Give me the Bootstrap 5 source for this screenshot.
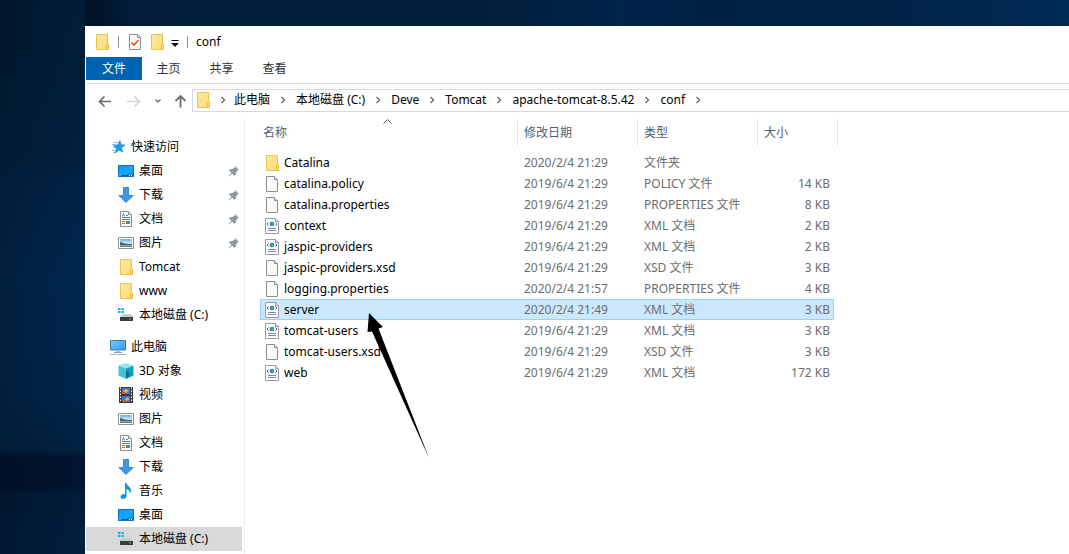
<!DOCTYPE html>
<html lang="zh-CN">
<head>
<meta charset="utf-8">
<meta name="viewport" content="width=device-width, initial-scale=1">
<title>conf</title>
<link href="https://cdn.jsdelivr.net/npm/bootstrap@5.3.0/dist/css/bootstrap.min.css" rel="stylesheet">
<style>
  body {
    font: 12px/16px "Noto Sans", "Noto Sans CJK SC", sans-serif;
    color: #000;
    background:
      linear-gradient(90deg, rgba(0,16,32,.35), rgba(0,40,80,.15)) 0 0 / 85px 100% no-repeat,
      linear-gradient(180deg, #001a33 0, #001b35 50px, #001f3c 160px, #002346 185px, #00284f 280px, #00264b 400px, #002140 450px, #00122a 458px, #00122a 488px, #001a36 494px, #001c3a 554px) 0 0 / 85px 100% no-repeat,
      linear-gradient(90deg, #001428 0, #001228 90px, #001c38 130px, #001f3c 500px, #00254a 620px, #002144 700px, #002244 850px, #002b54 100%);
  }
  a { color: inherit; text-decoration: none; }
  .desktop { padding: 26px 0 0 85px; min-height: 100vh; }
  .explorer { background: #fff; padding-left: 1px; }
  .titlebar { height: 31px; padding-left: 8px; }
  .titlebar .divider { width: 1px; height: 12px; background: #8f8f8f; margin: 0 8px; }
  .titlebar .folder-btn { margin: 0 6px; }
  .icon-btn { border: 0; background: none; padding: 0; display: flex; }
  .ribbon { height: 27px; border-bottom: 1px solid #dadbdc; }
  .ribbon .nav-link { width: 53px; height: 23px; padding: 0; line-height: 24px; text-align: center; color: #333; }
  .ribbon .nav-link.active { width: 56px; background: #0063b1; color: #fff; }
  .toolbar { padding: 5px 0 7px 11px; }
  .toolbar .nav-tools { gap: 14px; margin-right: 6px; }
  .address { height: 23px; border: 1px solid #d9d9d9; border-right: 0; padding: 0 0 2px 2px; }
  .crumb-sep { width: 26px; text-align: center; line-height: 0; }
  .crumb-sep.root-sep { width: 23px; }
  .sidebar { width: 159px; border-right: 1px solid #f0f0f0; padding: 16px 2px 3px 0; }
  .sidebar a { display: flex; align-items: center; gap: 5px; height: 24px; padding: 0 2px 0 32px; }
  .sidebar .group-head { padding-left: 24px; }
  .sidebar .current { background: #d9d9d9; }
  .listing { padding-left: 15px; }
  .files { width: auto; table-layout: fixed; border-collapse: separate; border-spacing: 0; color: #6d6d6d; }
  .files th { height: 27px; padding: 0 6px; font-weight: 400; color: #4c607a; border-left: 1px solid #e5e5e5; position: relative; }
  .files th:first-child { border-left: 0; padding-left: 3px; }
  .files th.edge { padding: 0; border-left: 0; border-right: 1px solid #e5e5e5; }
  .files td { height: 21px; padding: 0 4px 0 7px; white-space: nowrap; border: solid transparent; border-width: 1px 0; line-height: 16px; }
  .files td:first-child { padding-left: 3px; border-left-width: 1px; color: #000; }
  .files td.size { border-right-width: 1px; padding-right: 3px; text-align: right; }
  .files .chosen td { background: #cce8ff; background-clip: padding-box; border-color: #99d1ff; }
  .col-name { width: 257px; } .col-mid { width: 120px; } .col-size { width: 77px; } .col-edge { width: 4px; }
  .files .spacer-row td { height: 6px; padding: 0; border: 0; line-height: 0; }
  .sort-mark { position: absolute; left: 123px; top: 0; }
  .pointer { position: absolute; left: 100px; top: 6px; z-index: 2; }
</style>
</head>
<body>
<svg width="0" height="0" class="position-absolute" aria-hidden="true">
  <defs>
    <linearGradient id="g-fold" x1="0" y1="0" x2="1" y2="1"><stop offset="0" stop-color="#ffe9a2"/><stop offset="1" stop-color="#ffdc74"/></linearGradient>
    <linearGradient id="g-blue" x1="0" y1="0" x2="1" y2="1"><stop offset="0" stop-color="#0a9bf5"/><stop offset=".55" stop-color="#19a6ff"/><stop offset="1" stop-color="#0c8bea"/></linearGradient>
    <linearGradient id="g-scr" x1="0" y1="0" x2="1" y2="1"><stop offset="0" stop-color="#7cc8fb"/><stop offset="1" stop-color="#2f9cf0"/></linearGradient>
    <linearGradient id="g-sky" x1="0" y1="0" x2="0" y2="1"><stop offset="0" stop-color="#6fb2ee"/><stop offset=".6" stop-color="#d8ecf8"/><stop offset="1" stop-color="#3a6f86"/></linearGradient>
    <symbol id="folder" viewBox="0 0 16 16"><path d="M2.500.5h11v15h-11z" fill="url(#g-fold)" stroke="#eac54f"/><path d="M12.500 15.500v-4.500l1-1h1v5.500z" fill="#ffe08a" stroke="#e6bd3e"/></symbol>
    <symbol id="page" viewBox="0 0 16 16"><path d="M2.500.5h8l3 3v12h-11z" fill="#f9fafa" stroke="#8e8e8e"/><path d="M10.500.5v3h3" fill="#e8e8e8" stroke="#8e8e8e"/></symbol>
    <symbol id="xml" viewBox="0 0 16 16"><path d="M1.500.5h10l3 3v12h-13z" fill="#fdfdfe" stroke="#9a98a4"/><path d="M11.500.5v3h3" fill="#e6e4ee" stroke="#9a98a4"/><path d="M4.500 4.500 3 6l1.500 1.500M11.500 4.500 13 6l-1.500 1.500" fill="none" stroke="#555577"/><circle cx="8" cy="6" r="2.300" fill="#2583b8"/><path d="M7 4.500l2 .5.500 1.500L8 7.500z" fill="#49b58e"/><path d="M4 10.500h8M4 12.500h8" stroke="#8f80a8"/></symbol>
    <symbol id="check" viewBox="0 0 16 16"><path d="M2.500.5h8l3 3v12h-11z" fill="#fafafa" stroke="#8e8e8e"/><path d="M10.500.5v3h3" fill="none" stroke="#8e8e8e"/><path d="M4.500 8.500 7 11l4.500-5" fill="none" stroke="#e8561d" stroke-width="1.600"/></symbol>
    <symbol id="star" viewBox="0 0 16 16"><path d="M10 1.500l1 4.200 4 .3-3.500 2.800 1.200 4.400L9 11l-3.700 3 1-4.600L3.500 6.500l4.300-.6z" fill="#1e9bea" stroke="#1480cc" stroke-width=".6"/><path d="M3 3.500h5M2 5.500h4M3 8.500h2M2 11.500h4M3 13.500h2" stroke="#7cc6f5"/></symbol>
    <symbol id="desk" viewBox="0 0 16 16"><path d="M.5 2.500h15v11H.5z" fill="url(#g-blue)" stroke="#0873c4"/><path d="M1 12h14v1H1z" fill="#0a5fa8"/><path d="M1.500 12.500h1M11 12.500h1M13 12.500h1" stroke="#fff"/></symbol>
    <symbol id="down" viewBox="0 0 16 16"><path d="M5.500.5h5v8h4.700L8 15.500.8 8.500h4.700z" fill="#3e98e8" stroke="#2678cc" stroke-width=".8"/></symbol>
    <symbol id="doc" viewBox="0 0 16 16"><path d="M2.500.5h8l3 3v12h-11z" fill="#fff" stroke="#8e8e8e"/><path d="M10.500.5v3h3" fill="#e8e8e8" stroke="#8e8e8e"/><path d="M4 5.500 5.500 2.500l1 3M8 4.500h2M4 6.500h8M4 8.500h8M4 10.500h3M4 12.500h3" fill="none" stroke="#2d8fdc"/><path d="M8 10h4v3H8z" fill="#4e87a4"/></symbol>
    <symbol id="pic" viewBox="0 0 16 16"><path d="M.5 2.500h15v11H.5z" fill="#fff" stroke="#8e8e8e"/><path d="M2 4h12v8H2z" fill="url(#g-sky)"/><path d="M2 7c3 1 5 2 12 2v1H2z" fill="#3b6b4f"/></symbol>
    <symbol id="drive" viewBox="0 0 16 16"><path d="M0 1h2.500v2H0zM3.500 1H6v2H3.500zM0 4h2.500v2H0zM3.500 4H6v2H3.500z" fill="#12b0f2"/><path d="M4 7h9l2 3H2z" fill="#c9cccf"/><path d="M2 10h13v4H2z" fill="#3a3d40"/><path d="M11 11.500h2v1h-2z" fill="#38e05a"/></symbol>
    <symbol id="pc" viewBox="0 0 16 16"><path d="M.5 1.500h15v9.500H.5z" fill="url(#g-scr)" stroke="#40789f"/><path d="M6 11.500h4v1.500H6z" fill="#b6c6d2"/><path d="M4 13.500h8" stroke="#8ba0b0"/><path d="M0 15.500h16" stroke="#9bb8d0"/></symbol>
    <symbol id="cube" viewBox="0 0 16 16"><path d="M8 0l7.500 2.500L8 5.500.5 2.500z" fill="#9be6f0"/><path d="M.5 2.500 8 5.500V16L.5 12.500z" fill="#43c3d8"/><path d="M15.500 2.500 8 5.500V16l7.500-3.500z" fill="#0c9dc4"/><path d="M8 7l4 4-4 5z" fill="#0b7088"/></symbol>
    <symbol id="film" viewBox="0 0 16 16"><path d="M1 0h14v16H1z" fill="#3b3b3f"/><path d="M2.500.5v15M13.500.5v15" stroke="#fff" stroke-dasharray="1.500 1.500"/><path d="M4 1h8v6H4zM4 9h8v6H4z" fill="#4774c8"/><path d="M5 4l3-2 3 2-3 2zM7 12l3-2 1 3-3 1z" fill="#dfb83c"/><path d="M4 5h3v2H4zM4 13h3v2H4z" fill="#c8553d"/></symbol>
    <symbol id="note" viewBox="0 0 16 16"><path d="M7 0h1.500c.5 3 4.500 3.500 4.500 7.500 0 1.500-.5 2.500-1.200 3.500.4-3-1.300-4-3.300-4.700V13c0 1.800-1.700 3-3.700 3-1.500 0-2.300-.8-2.300-1.900 0-1.900 2.200-3.300 4.500-3z" fill="#0c98ee"/></symbol>
    <symbol id="pin" viewBox="0 0 12 12"><path d="M7 1l4 4-1.500.5-1.500 2v2L6.500 11 4 8.500 1 11.500.5 11l3-3L1 5.500 2.500 4h2l2-1.500z" fill="#8d99a2"/></symbol>
    <symbol id="chev" viewBox="0 0 6 8"><path d="M1.500 1 4.500 4l-3 3" fill="none" stroke="#6d6d6d" stroke-width="1.400"/></symbol>
  </defs>
</svg>

<div class="desktop d-flex">
  <div class="explorer flex-grow-1 d-flex flex-column">
    <header class="titlebar d-flex align-items-center">
      <svg width="16" height="16"><use href="#folder"/></svg>
      <span class="divider"></span>
      <button class="icon-btn" type="button" aria-label="属性"><svg width="16" height="16"><use href="#check"/></svg></button>
      <button class="icon-btn folder-btn" type="button" aria-label="新建文件夹"><svg width="16" height="16"><use href="#folder"/></svg></button>
      <button class="icon-btn" type="button" aria-label="自定义快速访问工具栏"><svg width="8" height="16"><path d="M.5 6.500h7" stroke="#000"/><path d="M0 9h8l-4 4z" fill="#111"/></svg></button>
      <span class="divider"></span>
      <span>conf</span>
    </header>

    <nav class="ribbon nav flex-nowrap" aria-label="功能区">
      <a class="nav-link active" href="#">文件</a>
      <a class="nav-link" href="#">主页</a>
      <a class="nav-link" href="#">共享</a>
      <a class="nav-link" href="#">查看</a>
    </nav>

    <div class="toolbar d-flex align-items-center">
      <div class="nav-tools d-flex align-items-center">
        <button class="icon-btn" type="button" aria-label="后退"><svg width="16" height="16"><path d="M14 8.500H3M7.500 3.500l-5 5 5 5" fill="none" stroke="#6b6b6b" stroke-width="1.700"/></svg></button>
        <button class="icon-btn" type="button" aria-label="前进"><svg width="14" height="16"><path d="M0 8.500h12M7.500 3.500l5 5-5 5" fill="none" stroke="#d4d4d4" stroke-width="1.700"/></svg></button>
        <button class="icon-btn" type="button" aria-label="最近位置"><svg width="6" height="16"><path d="M.5 6.500 3 9l2.500-2.500" fill="none" stroke="#777" stroke-width="1.500"/></svg></button>
        <button class="icon-btn" type="button" aria-label="上移"><svg width="11" height="16"><path d="M5.500 14.500v-11M.5 8l5-5 5 5" fill="none" stroke="#6b6b6b" stroke-width="1.800"/></svg></button>
      </div>
      <div class="address flex-grow-1 d-flex align-items-center">
        <svg width="16" height="16"><use href="#folder"/></svg>
        <span class="crumb-sep root-sep"><svg width="6" height="8"><use href="#chev"/></svg></span>
        <a href="#">此电脑</a>
        <span class="crumb-sep"><svg width="6" height="8"><use href="#chev"/></svg></span>
        <a href="#">本地磁盘 (C:)</a>
        <span class="crumb-sep"><svg width="6" height="8"><use href="#chev"/></svg></span>
        <a href="#">Deve</a>
        <span class="crumb-sep"><svg width="6" height="8"><use href="#chev"/></svg></span>
        <a href="#">Tomcat</a>
        <span class="crumb-sep"><svg width="6" height="8"><use href="#chev"/></svg></span>
        <a href="#">apache-tomcat-8.5.42</a>
        <span class="crumb-sep"><svg width="6" height="8"><use href="#chev"/></svg></span>
        <a href="#">conf</a>
        <span class="crumb-sep"><svg width="6" height="8"><use href="#chev"/></svg></span>
      </div>
    </div>

    <div class="d-flex flex-grow-1">
      <nav class="sidebar flex-shrink-0 d-flex flex-column" aria-label="导航窗格">
        <a class="group-head" href="#"><svg width="16" height="16"><use href="#star"/></svg>快速访问</a>
        <a href="#"><svg width="16" height="16"><use href="#desk"/></svg>桌面<svg class="ms-auto" width="12" height="12"><use href="#pin"/></svg></a>
        <a href="#"><svg width="16" height="16"><use href="#down"/></svg>下载<svg class="ms-auto" width="12" height="12"><use href="#pin"/></svg></a>
        <a href="#"><svg width="16" height="16"><use href="#doc"/></svg>文档<svg class="ms-auto" width="12" height="12"><use href="#pin"/></svg></a>
        <a href="#"><svg width="16" height="16"><use href="#pic"/></svg>图片<svg class="ms-auto" width="12" height="12"><use href="#pin"/></svg></a>
        <a href="#"><svg width="16" height="16"><use href="#folder"/></svg>Tomcat</a>
        <a href="#"><svg width="16" height="16"><use href="#folder"/></svg>www</a>
        <a href="#"><svg width="16" height="16"><use href="#drive"/></svg>本地磁盘 (C:)</a>
        <a class="group-head mt-2" href="#"><svg width="16" height="16"><use href="#pc"/></svg>此电脑</a>
        <a href="#"><svg width="16" height="16"><use href="#cube"/></svg>3D 对象</a>
        <a href="#"><svg width="16" height="16"><use href="#film"/></svg>视频</a>
        <a href="#"><svg width="16" height="16"><use href="#pic"/></svg>图片</a>
        <a href="#"><svg width="16" height="16"><use href="#doc"/></svg>文档</a>
        <a href="#"><svg width="16" height="16"><use href="#down"/></svg>下载</a>
        <a href="#"><svg width="16" height="16"><use href="#note"/></svg>音乐</a>
        <a href="#"><svg width="16" height="16"><use href="#desk"/></svg>桌面</a>
        <a class="current" href="#" aria-current="page"><svg width="16" height="16"><use href="#drive"/></svg>本地磁盘 (C:)</a>
      </nav>

      <main class="listing flex-grow-1">
        <table class="files">
          <colgroup><col class="col-name"><col class="col-mid"><col class="col-mid"><col class="col-size"><col class="col-edge"></colgroup>
          <thead>
            <tr>
              <th scope="col">名称<svg class="sort-mark" width="9" height="5"><path d="M.5 4.500l4-4 4 4" fill="none" stroke="#5a5a5a"/></svg></th>
              <th scope="col">修改日期</th><th scope="col">类型</th><th scope="col">大小</th><th class="edge" aria-hidden="true"></th>
            </tr>
          </thead>
          <tbody>
            <tr class="spacer-row" aria-hidden="true"><td colspan="5"></td></tr>
            <tr><td><div class="d-flex align-items-center gap-1"><svg width="16" height="16"><use href="#folder"/></svg>Catalina</div></td><td>2020/2/4 21:29</td><td>文件夹</td><td class="size"></td></tr>
            <tr><td><div class="d-flex align-items-center gap-1"><svg width="16" height="16"><use href="#page"/></svg>catalina.policy</div></td><td>2019/6/4 21:29</td><td>POLICY 文件</td><td class="size">14 KB</td></tr>
            <tr><td><div class="d-flex align-items-center gap-1"><svg width="16" height="16"><use href="#page"/></svg>catalina.properties</div></td><td>2019/6/4 21:29</td><td>PROPERTIES 文件</td><td class="size">8 KB</td></tr>
            <tr><td><div class="d-flex align-items-center gap-1"><svg width="16" height="16"><use href="#xml"/></svg>context</div></td><td>2019/6/4 21:29</td><td>XML 文档</td><td class="size">2 KB</td></tr>
            <tr><td><div class="d-flex align-items-center gap-1"><svg width="16" height="16"><use href="#xml"/></svg>jaspic-providers</div></td><td>2019/6/4 21:29</td><td>XML 文档</td><td class="size">2 KB</td></tr>
            <tr><td><div class="d-flex align-items-center gap-1"><svg width="16" height="16"><use href="#page"/></svg>jaspic-providers.xsd</div></td><td>2019/6/4 21:29</td><td>XSD 文件</td><td class="size">3 KB</td></tr>
            <tr><td><div class="d-flex align-items-center gap-1"><svg width="16" height="16"><use href="#page"/></svg>logging.properties</div></td><td>2020/2/4 21:57</td><td>PROPERTIES 文件</td><td class="size">4 KB</td></tr>
            <tr class="chosen"><td><div class="d-flex align-items-center gap-1 position-relative"><svg width="16" height="16"><use href="#xml"/></svg>server<svg class="pointer" width="72" height="152" viewBox="364 308 72 152" aria-hidden="true"><path d="M369 313l14 14-4.500 1.500L429 458 372 331.500l-4.500.5z" fill="#000"/></svg></div></td><td>2020/2/4 21:49</td><td>XML 文档</td><td class="size">3 KB</td></tr>
            <tr><td><div class="d-flex align-items-center gap-1"><svg width="16" height="16"><use href="#xml"/></svg>tomcat-users</div></td><td>2019/6/4 21:29</td><td>XML 文档</td><td class="size">3 KB</td></tr>
            <tr><td><div class="d-flex align-items-center gap-1"><svg width="16" height="16"><use href="#page"/></svg>tomcat-users.xsd</div></td><td>2019/6/4 21:29</td><td>XSD 文件</td><td class="size">3 KB</td></tr>
            <tr><td><div class="d-flex align-items-center gap-1"><svg width="16" height="16"><use href="#xml"/></svg>web</div></td><td>2019/6/4 21:29</td><td>XML 文档</td><td class="size">172 KB</td></tr>
          </tbody>
        </table>
      </main>
    </div>
  </div>
</div>
<script src="https://cdn.jsdelivr.net/npm/bootstrap@5.3.0/dist/js/bootstrap.bundle.min.js"></script>
</body>
</html>
